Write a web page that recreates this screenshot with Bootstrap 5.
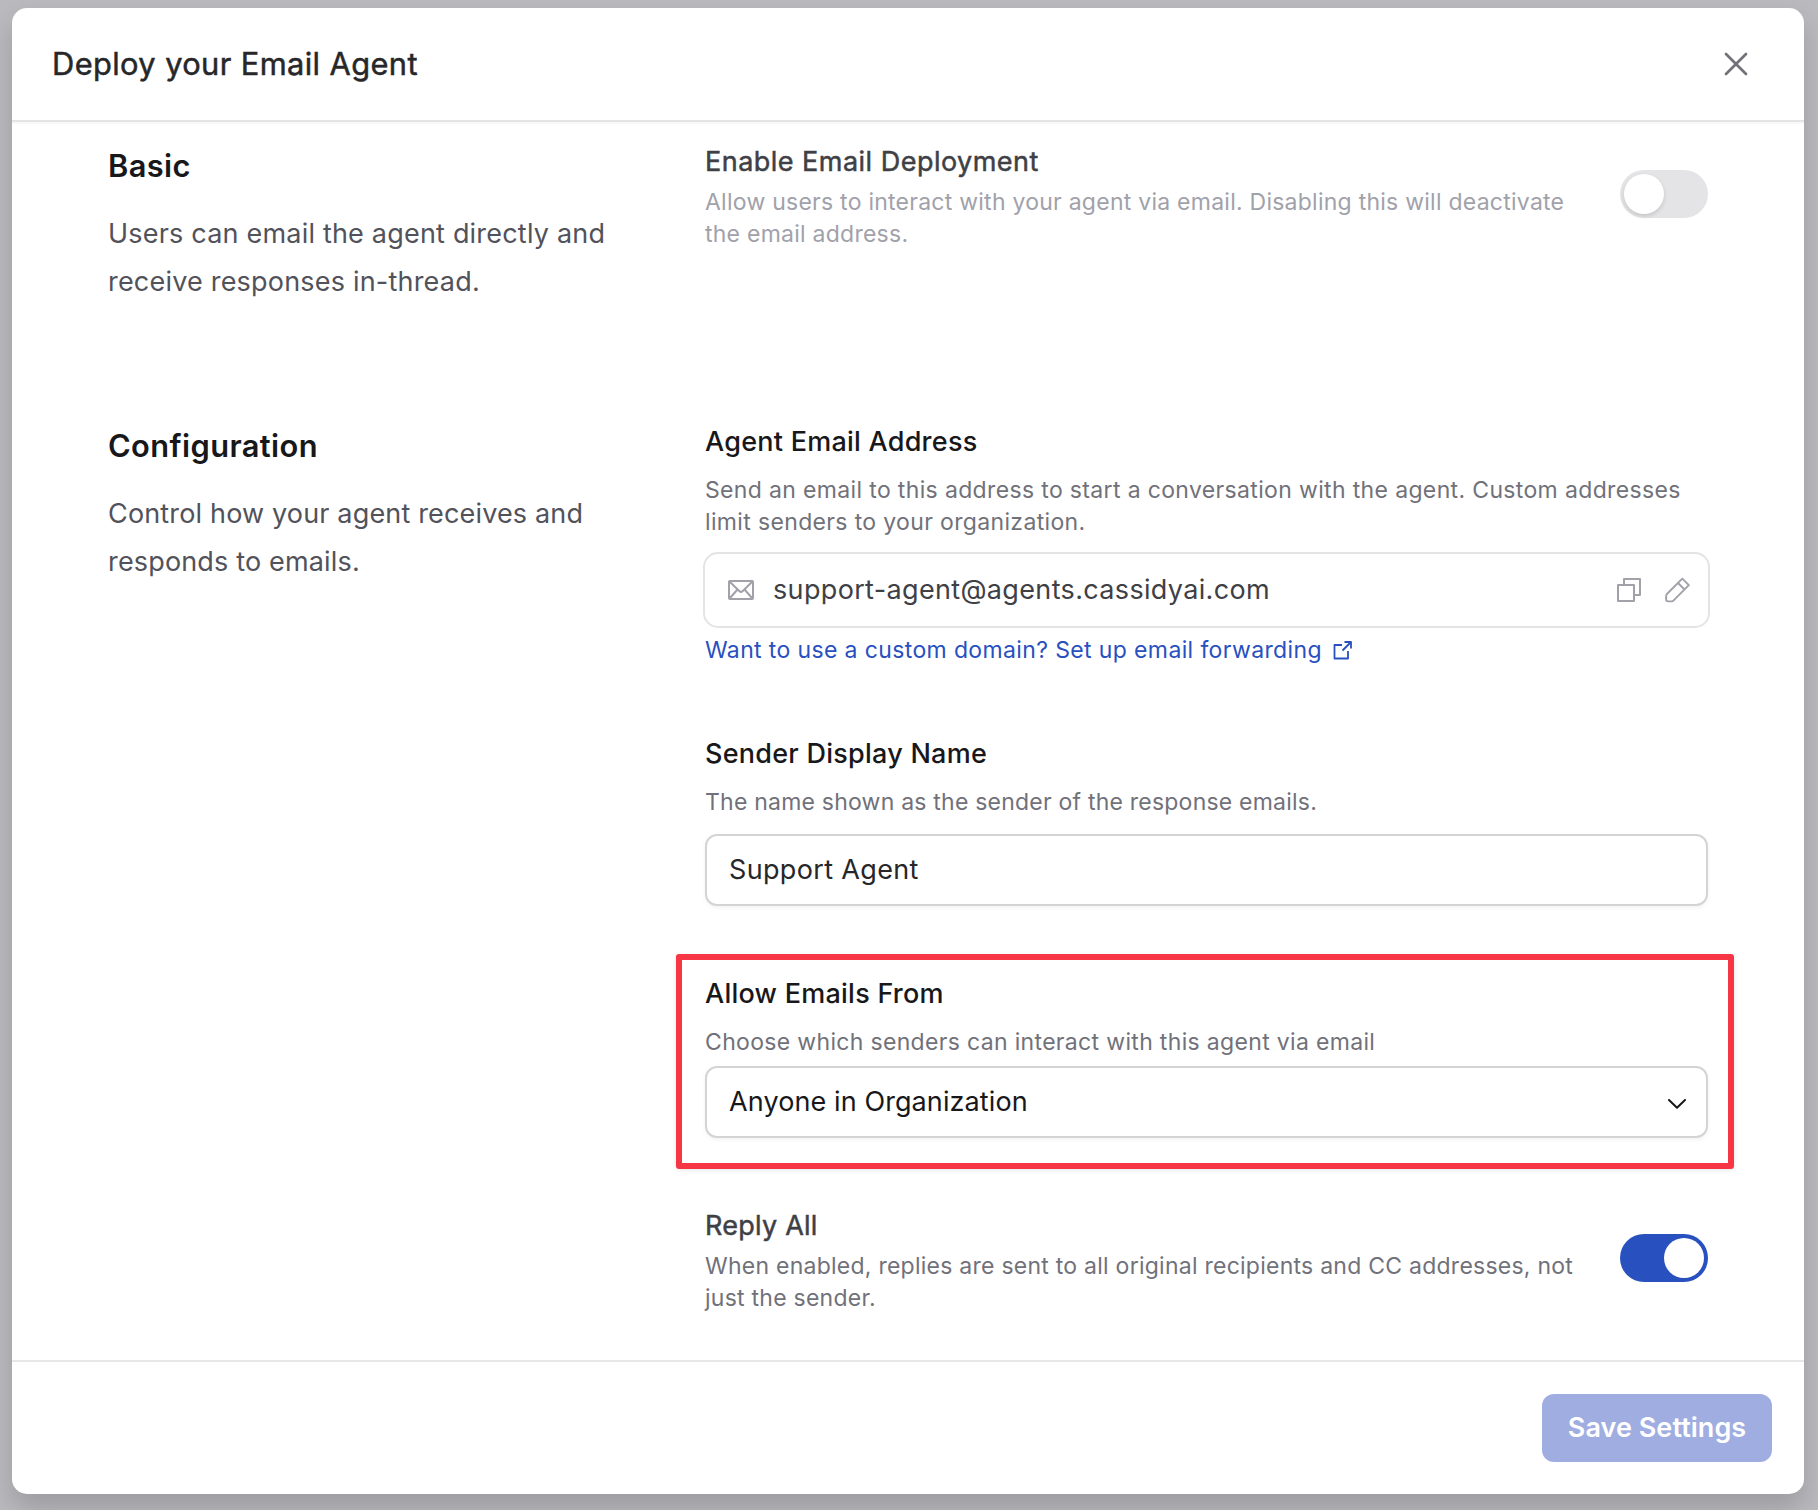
<!DOCTYPE html>
<html lang="en">
<head>
<meta charset="utf-8">
<meta name="viewport" content="width=device-width, initial-scale=1">
<title>Deploy your Email Agent</title>
<link href="https://cdn.jsdelivr.net/npm/bootstrap@5.3.0/dist/css/bootstrap.min.css" rel="stylesheet">
<style>
body{background:#bab9be;font-family:Inter,"Liberation Sans",sans-serif;color:#18181b;height:1510px;overflow:hidden;padding:8px 14px 16px 12px}
.sheet{background:#fff;border-radius:15px;box-shadow:0 14px 26px rgba(0,0,0,.16);height:1486px}
.sheet-head{height:114px;border-bottom:2px solid #e4e4e5;box-shadow:0 2px 0 #f8f8f8;padding:0 56px 0 40px;flex:none}
.sheet-foot{height:134px;border-top:2px solid #e7e7e8;padding:0 32px;flex:none}
.sheet-title{font-size:30.8px;line-height:40px;font-weight:400;color:#27272a;letter-spacing:.4px;-webkit-text-stroke:.5px #27272a}
.side{width:693px;padding-left:96px;flex:none}
.controls{width:1003px;flex:none}
.sec-title{font-size:30.8px;line-height:40px;font-weight:600;letter-spacing:.4px;margin:24px 0}
.sec-text{font-size:27px;line-height:48px;color:#52525b;letter-spacing:.2px}
.sec-text-config{letter-spacing:.16px}
.section-basic{height:280px}
.lbl{font-size:27px;line-height:32px;font-weight:500;letter-spacing:.25px;margin-bottom:16px}
.lbl-soft{font-weight:400;color:#3f3f46;-webkit-text-stroke:.5px #3f3f46;letter-spacing:.48px;margin-bottom:8px}
.lbl-reply{letter-spacing:.25px}
.hint{font-size:23px;line-height:32px;color:#71717a;letter-spacing:.25px}
.hint-off{color:#a1a1aa}
.hint-address{letter-spacing:.35px}
.hint-name{letter-spacing:.22px}
.hint-choose{letter-spacing:.33px}
.switch-row{height:104px}
.toggle{width:88px;height:48px;border-radius:24px;background:#e4e4e6;padding:4px;border:0;flex:none;display:flex}
.toggle span{width:40px;height:40px;border-radius:50%;background:#fff;box-shadow:0 2px 4px rgba(0,0,0,.14)}
.toggle.on{background:#2850bf;justify-content:flex-end}
.toggle.on span{box-shadow:none}
.address{height:76px;width:1007px;margin:14px 0 6px -2px;border:2px solid #e4e4e5;border-radius:15px;padding:0 18px 0 23px;font-size:27px;color:#3f3f46;letter-spacing:.34px}
.address svg{color:#a1a1aa}
.address-icon{margin-right:19px}
.fwd{font-size:23px;line-height:32px;color:#2850bf;letter-spacing:.37px;margin-bottom:72px}
.fwd svg{margin-left:11px}
.field,.field:focus{height:72px;border:2px solid #d4d4d6;border-radius:12px;padding:0 22px 2px;font-size:27px;color:#27272a;letter-spacing:.34px;box-shadow:0 2px 4px rgba(0,0,0,.05);background:#fff}
.picker,.picker:focus{color:#18181b;letter-spacing:.1px;padding:0 20px 0 22px}
.callout{margin:48px -26px 41px -29px;border:6px solid #f73645;border-radius:3px;padding:18px 20px 25px 23px;box-shadow:0 1px 5px rgba(0,0,0,.1)}
.save,.save:disabled{width:230px;height:68px;border:0;border-radius:12px;background:#a0ade1;color:#fff;font-size:27px;font-weight:600;letter-spacing:.05px;opacity:1;padding:0}
</style>
</head>
<body>
<main class="sheet d-flex flex-column">
  <header class="sheet-head d-flex align-items-center justify-content-between">
    <h1 class="sheet-title m-0">Deploy your Email Agent</h1>
    <button class="btn p-0 border-0 d-flex" aria-label="Close"><svg width="24" height="24" viewBox="0 0 24 24" fill="none" stroke="#71717a" stroke-width="2.7" stroke-linecap="round"><path d="M2 2l20 20M22 2L2 22"/></svg></button>
  </header>

  <div class="flex-grow-1">
    <section class="section-basic d-flex">
      <div class="side">
        <h2 class="sec-title">Basic</h2>
        <p class="sec-text mb-0">Users can email the agent directly and<br>receive responses in-thread.</p>
      </div>
      <div class="controls">
        <div class="switch-row d-flex justify-content-between align-items-start mt-4">
          <div>
            <div class="lbl lbl-soft">Enable Email Deployment</div>
            <div class="hint hint-off">Allow users to interact with your agent via email. Disabling this will deactivate<br>the email address.</div>
          </div>
          <button class="toggle mt-4" role="switch" aria-checked="false" aria-label="Enable Email Deployment"><span></span></button>
        </div>
      </div>
    </section>

    <section class="d-flex">
      <div class="side">
        <h2 class="sec-title">Configuration</h2>
        <p class="sec-text sec-text-config mb-0">Control how your agent receives and<br>responds to emails.</p>
      </div>
      <div class="controls pt-4">
        <div class="lbl">Agent Email Address</div>
        <div class="hint hint-address">Send an email to this address to start a conversation with the agent. Custom addresses<br>limit senders to your organization.</div>
        <div class="address d-flex align-items-center">
          <svg class="address-icon" width="26" height="20" viewBox="0 0 26 20" fill="none" stroke="currentColor" stroke-width="2" stroke-linejoin="round"><rect x="1" y="1" width="24" height="18" rx=".8"/><path d="M1.500 1.500L11.500 11.200Q13 12.600 14.500 11.200L24.500 1.500M1.500 18.500L9.500 9.500M24.500 18.500L16.500 9.500"/></svg>
          <span class="flex-grow-1">support-agent@agents.cassidyai.com</span>
          <svg class="me-4" width="24" height="24" viewBox="0 0 24 24" fill="none" stroke="currentColor" stroke-width="2" stroke-linejoin="round"><path d="M1 7h16v16H1zM7 7V1h16v16h-6"/></svg>
          <svg width="25" height="26" viewBox="0 0 26 26" fill="none" stroke="currentColor" stroke-width="2" stroke-linejoin="round"><path d="M18 1.200L24.800 8 9 23.800Q8 24.800 7 24.800H3Q1.200 24.800 1.200 23V19Q1.200 18 2 17.200zM13.500 5.700L20.300 12.500"/></svg>
        </div>
        <div class="fwd d-flex align-items-center">Want to use a custom domain? Set up email forwarding
          <svg width="19" height="19" viewBox="0 0 19 19" fill="none" stroke="currentColor" stroke-width="1.8" stroke-linejoin="round"><path d="M9 4H1.500V17.500H15V10M11.500 1H18V7.500M18 1L9.500 9.500"/></svg>
        </div>

        <label class="lbl d-block" for="sender">Sender Display Name</label>
        <div class="hint hint-name mb-3">The name shown as the sender of the response emails.</div>
        <input id="sender" class="form-control field" value="Support Agent">

        <div class="callout">
          <div class="lbl">Allow Emails From</div>
          <div class="hint hint-choose mb-2">Choose which senders can interact with this agent via email</div>
          <button class="field picker w-100 d-flex align-items-center justify-content-between">Anyone in Organization
            <svg class="mt-1" width="18" height="10" viewBox="0 0 18 10" fill="none" stroke="currentColor" stroke-width="2" stroke-linecap="round" stroke-linejoin="round"><path d="M1 1l8 7.800L17 1"/></svg>
          </button>
        </div>

        <div class="switch-row d-flex justify-content-between align-items-start">
          <div>
            <div class="lbl lbl-soft lbl-reply">Reply All</div>
            <div class="hint">When enabled, replies are sent to all original recipients and CC addresses, not<br>just the sender.</div>
          </div>
          <button class="toggle on mt-4" role="switch" aria-checked="true" aria-label="Reply All"><span></span></button>
        </div>
      </div>
    </section>
  </div>

  <footer class="sheet-foot d-flex align-items-center justify-content-end">
    <button class="btn save" disabled>Save Settings</button>
  </footer>
</main>
<script src="https://cdn.jsdelivr.net/npm/bootstrap@5.3.0/dist/js/bootstrap.bundle.min.js"></script>
</body>
</html>
